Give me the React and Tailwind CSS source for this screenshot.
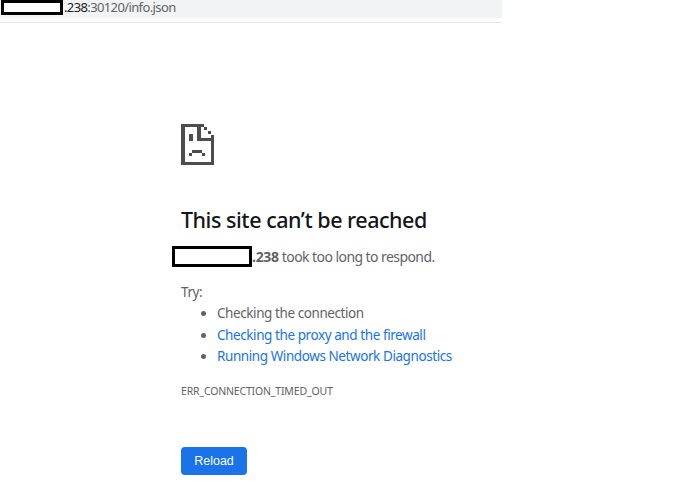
export default function App() {
  return (
    <div className="w-[689px] h-[499px] overflow-hidden bg-white font-['Noto_Sans',sans-serif] text-[#5f6368]">
      <div className="w-[502px] h-[23px] border-b border-[#e6e6e6]">
        <div className="h-[18px] bg-[#f1f3f4] flex items-start text-[13px] leading-[14px] tracking-[-0.62px] text-[#5f6368]">
          <span className="ml-[1px] w-[62px] h-[15px] border-[3px] border-black bg-white"></span>
          <span className="ml-[1px] text-[#202124]">.238</span>
          <span>:30120/info.json</span>
        </div>
      </div>
      <div className="pl-[181px] pt-[101px]">
        <svg width="33" height="41" viewBox="0 0 33 41" shapeRendering="crispEdges" className="block">
          <path fill="#4d4d4d" d="M0 0h23v3H4v35h26V11h3v30H0z" />
          <path fill="#4d4d4d" d="M16 1h4v13h13v3H16z" />
          <path fill="#4d4d4d" d="M23 3h3v3h-3zM27 7h3v3h-3z" />
          <path fill="#4d4d4d" d="M8 10h4v7H8zM11 26h10v3H11zM8 29h3v3H8zM21 29h3v3h-3z" />
        </svg>
        <h1 className="mt-[41px] text-[21.5px] leading-[28px] font-medium tracking-[-0.47px] text-[#14151a]">This site can’t be reached</h1>
        <p className="mt-[12px] -ml-[9px] flex items-center h-[21px] text-[14px] tracking-[-0.57px]">
          <span className="w-[80px] h-[21px] border-[3px] border-black bg-white"></span>
          <span className="font-bold tracking-[-0.3px]">.238</span>
          <span className="whitespace-pre"> took too long to respond.</span>
        </p>
        <p className="mt-[15px] text-[13.5px] leading-[20px] tracking-[-0.4px]">Try:</p>
        <ul className="mt-[1px] pl-[36px] list-disc text-[13.5px] leading-[21.5px] tracking-[-0.42px] marker:text-[#5f6368]">
          <li>Checking the connection</li>
          <li className="text-[#1a73e8]"><span>Checking the proxy and the firewall</span></li>
          <li className="text-[#1a73e8]"><span>Running Windows Network Diagnostics</span></li>
        </ul>
        <p className="mt-[16px] text-[10.5px] leading-[14px] tracking-[-0.17px]">ERR_CONNECTION_TIMED_OUT</p>
        <button className="mt-[49px] pt-[2px] block w-[66px] h-[28px] rounded-[4px] bg-[#1a73e8] text-white text-[12.5px] font-['Liberation_Sans',sans-serif] font-medium">Reload</button>
      </div>
    </div>
  );
}
